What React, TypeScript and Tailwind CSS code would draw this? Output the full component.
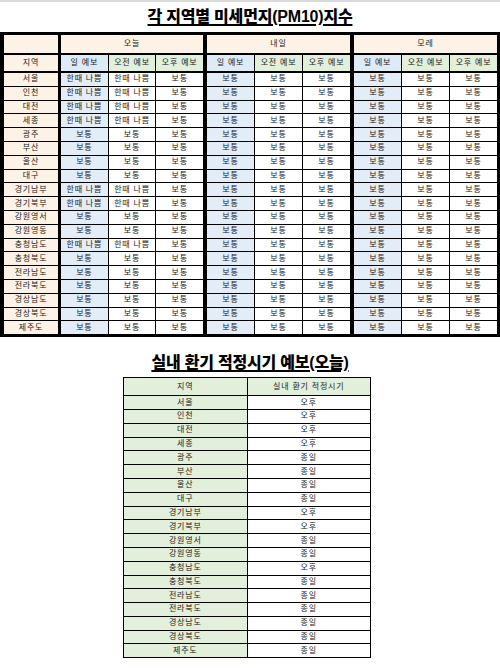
import React from "react";

const GROUPS = ["오늘", "내일", "모레"];
const SUBS = ["일 예보", "오전 예보", "오후 예보"];

const BAD = "한때 나쁨";
const OK = "보통";

// regions flagged "한때 나쁨" for today's day + morning forecast
const BAD_TODAY = ["서울", "인천", "대전", "세종", "경기남부", "경기북부", "충청남도"];

const REGIONS: { name: string; vent: string }[] = [
  { name: "서울", vent: "오후" },
  { name: "인천", vent: "오후" },
  { name: "대전", vent: "오후" },
  { name: "세종", vent: "오후" },
  { name: "광주", vent: "종일" },
  { name: "부산", vent: "종일" },
  { name: "울산", vent: "종일" },
  { name: "대구", vent: "종일" },
  { name: "경기남부", vent: "오후" },
  { name: "경기북부", vent: "오후" },
  { name: "강원영서", vent: "종일" },
  { name: "강원영동", vent: "종일" },
  { name: "충청남도", vent: "오후" },
  { name: "충청북도", vent: "종일" },
  { name: "전라남도", vent: "종일" },
  { name: "전라북도", vent: "종일" },
  { name: "경상남도", vent: "종일" },
  { name: "경상북도", vent: "종일" },
  { name: "제주도", vent: "종일" },
];

const GROUP_W = ["w-[142px]", "w-[143px]", "w-[143px]"];
const GROUP_ML = ["ml-[3px]", "ml-[4px]", "ml-[4px]"];

function Cell({ children, className = "" }: { children?: React.ReactNode; className?: string }) {
  return (
    <div className={`flex items-center justify-center tracking-[0.8px] ${className}`}>{children}</div>
  );
}

function DustTable() {
  return (
    <div className="flex w-[500px] flex-col bg-black py-[3px] pl-[4px] pr-[3px] text-[8px] leading-none text-[#222]">
      {/* header row 1 */}
      <div className="flex h-[18px]">
        <Cell className="w-[54px] bg-[#fdf2e6]" />
        {GROUPS.map((g, i) => (
          <Cell key={g} className={`${GROUP_W[i]} ${GROUP_ML[i]} bg-[#fdf2e6]`}>
            {g}
          </Cell>
        ))}
      </div>

      {/* header row 2 */}
      <div className="mt-[2px] flex h-[16px]">
        <Cell className="w-[54px] bg-[#fdf2e6]">지역</Cell>
        {GROUPS.map((g, i) => (
          <div key={g} className={`${GROUP_W[i]} ${GROUP_ML[i]} grid grid-cols-3 gap-px`}>
            {SUBS.map((s, j) => (
              <Cell key={s} className={j === 0 ? "bg-[#ddebf7]" : "bg-[#e2efda]"}>
                {s}
              </Cell>
            ))}
          </div>
        ))}
      </div>

      {/* data rows */}
      <div className="mt-[2px] flex flex-col gap-px">
        {REGIONS.map((r) => {
          const bad = BAD_TODAY.includes(r.name);
          return (
            <div key={r.name} className="flex h-[12.8px]">
              <Cell className="w-[54px] bg-[#fdf2e6]">{r.name}</Cell>
              {GROUPS.map((g, i) => (
                <div key={g} className={`${GROUP_W[i]} ${GROUP_ML[i]} grid grid-cols-3 gap-px`}>
                  {SUBS.map((s, j) => (
                    <Cell key={s} className={j === 0 ? "bg-[#e3edf8]" : "bg-white"}>
                      {i === 0 && j < 2 && bad ? BAD : OK}
                    </Cell>
                  ))}
                </div>
              ))}
            </div>
          );
        })}
      </div>
    </div>
  );
}

function VentTable() {
  return (
    <div className="ml-[123px] flex w-[248px] flex-col gap-px bg-black p-px text-[8px] leading-none text-[#222]">
      <div className="grid h-[17px] grid-cols-2 gap-px">
        <Cell className="bg-[#e2efda]">지역</Cell>
        <Cell className="bg-[#e2efda]">실내 환기 적정시기</Cell>
      </div>
      {REGIONS.map((r) => (
        <div key={r.name} className="grid h-[12.8px] grid-cols-2 gap-px">
          <Cell className="bg-[#e2efda]">{r.name}</Cell>
          <Cell className="bg-white">{r.vent}</Cell>
        </div>
      ))}
    </div>
  );
}

function Title({ children }: { children: React.ReactNode }) {
  return (
    <h1 className="text-[16px] font-black leading-[20px] tracking-[-0.2px] text-black underline decoration-[1.5px] underline-offset-[2px]">
      {children}
    </h1>
  );
}

export default function App() {
  return (
    <div className="flex h-[668px] w-[500px] flex-col bg-white font-['Liberation_Sans','Noto_Sans_CJK_KR',sans-serif]">
      <div className="h-[2px] bg-[#d9d9d9]" />
      <div className="flex h-[30px] justify-center pt-[5px]">
        <Title>각 지역별 미세먼지(PM10)지수</Title>
      </div>
      <DustTable />
      <div className="flex h-[40px] justify-center pt-[16px]">
        <Title>실내 환기 적정시기 예보(오늘)</Title>
      </div>
      <VentTable />
    </div>
  );
}
